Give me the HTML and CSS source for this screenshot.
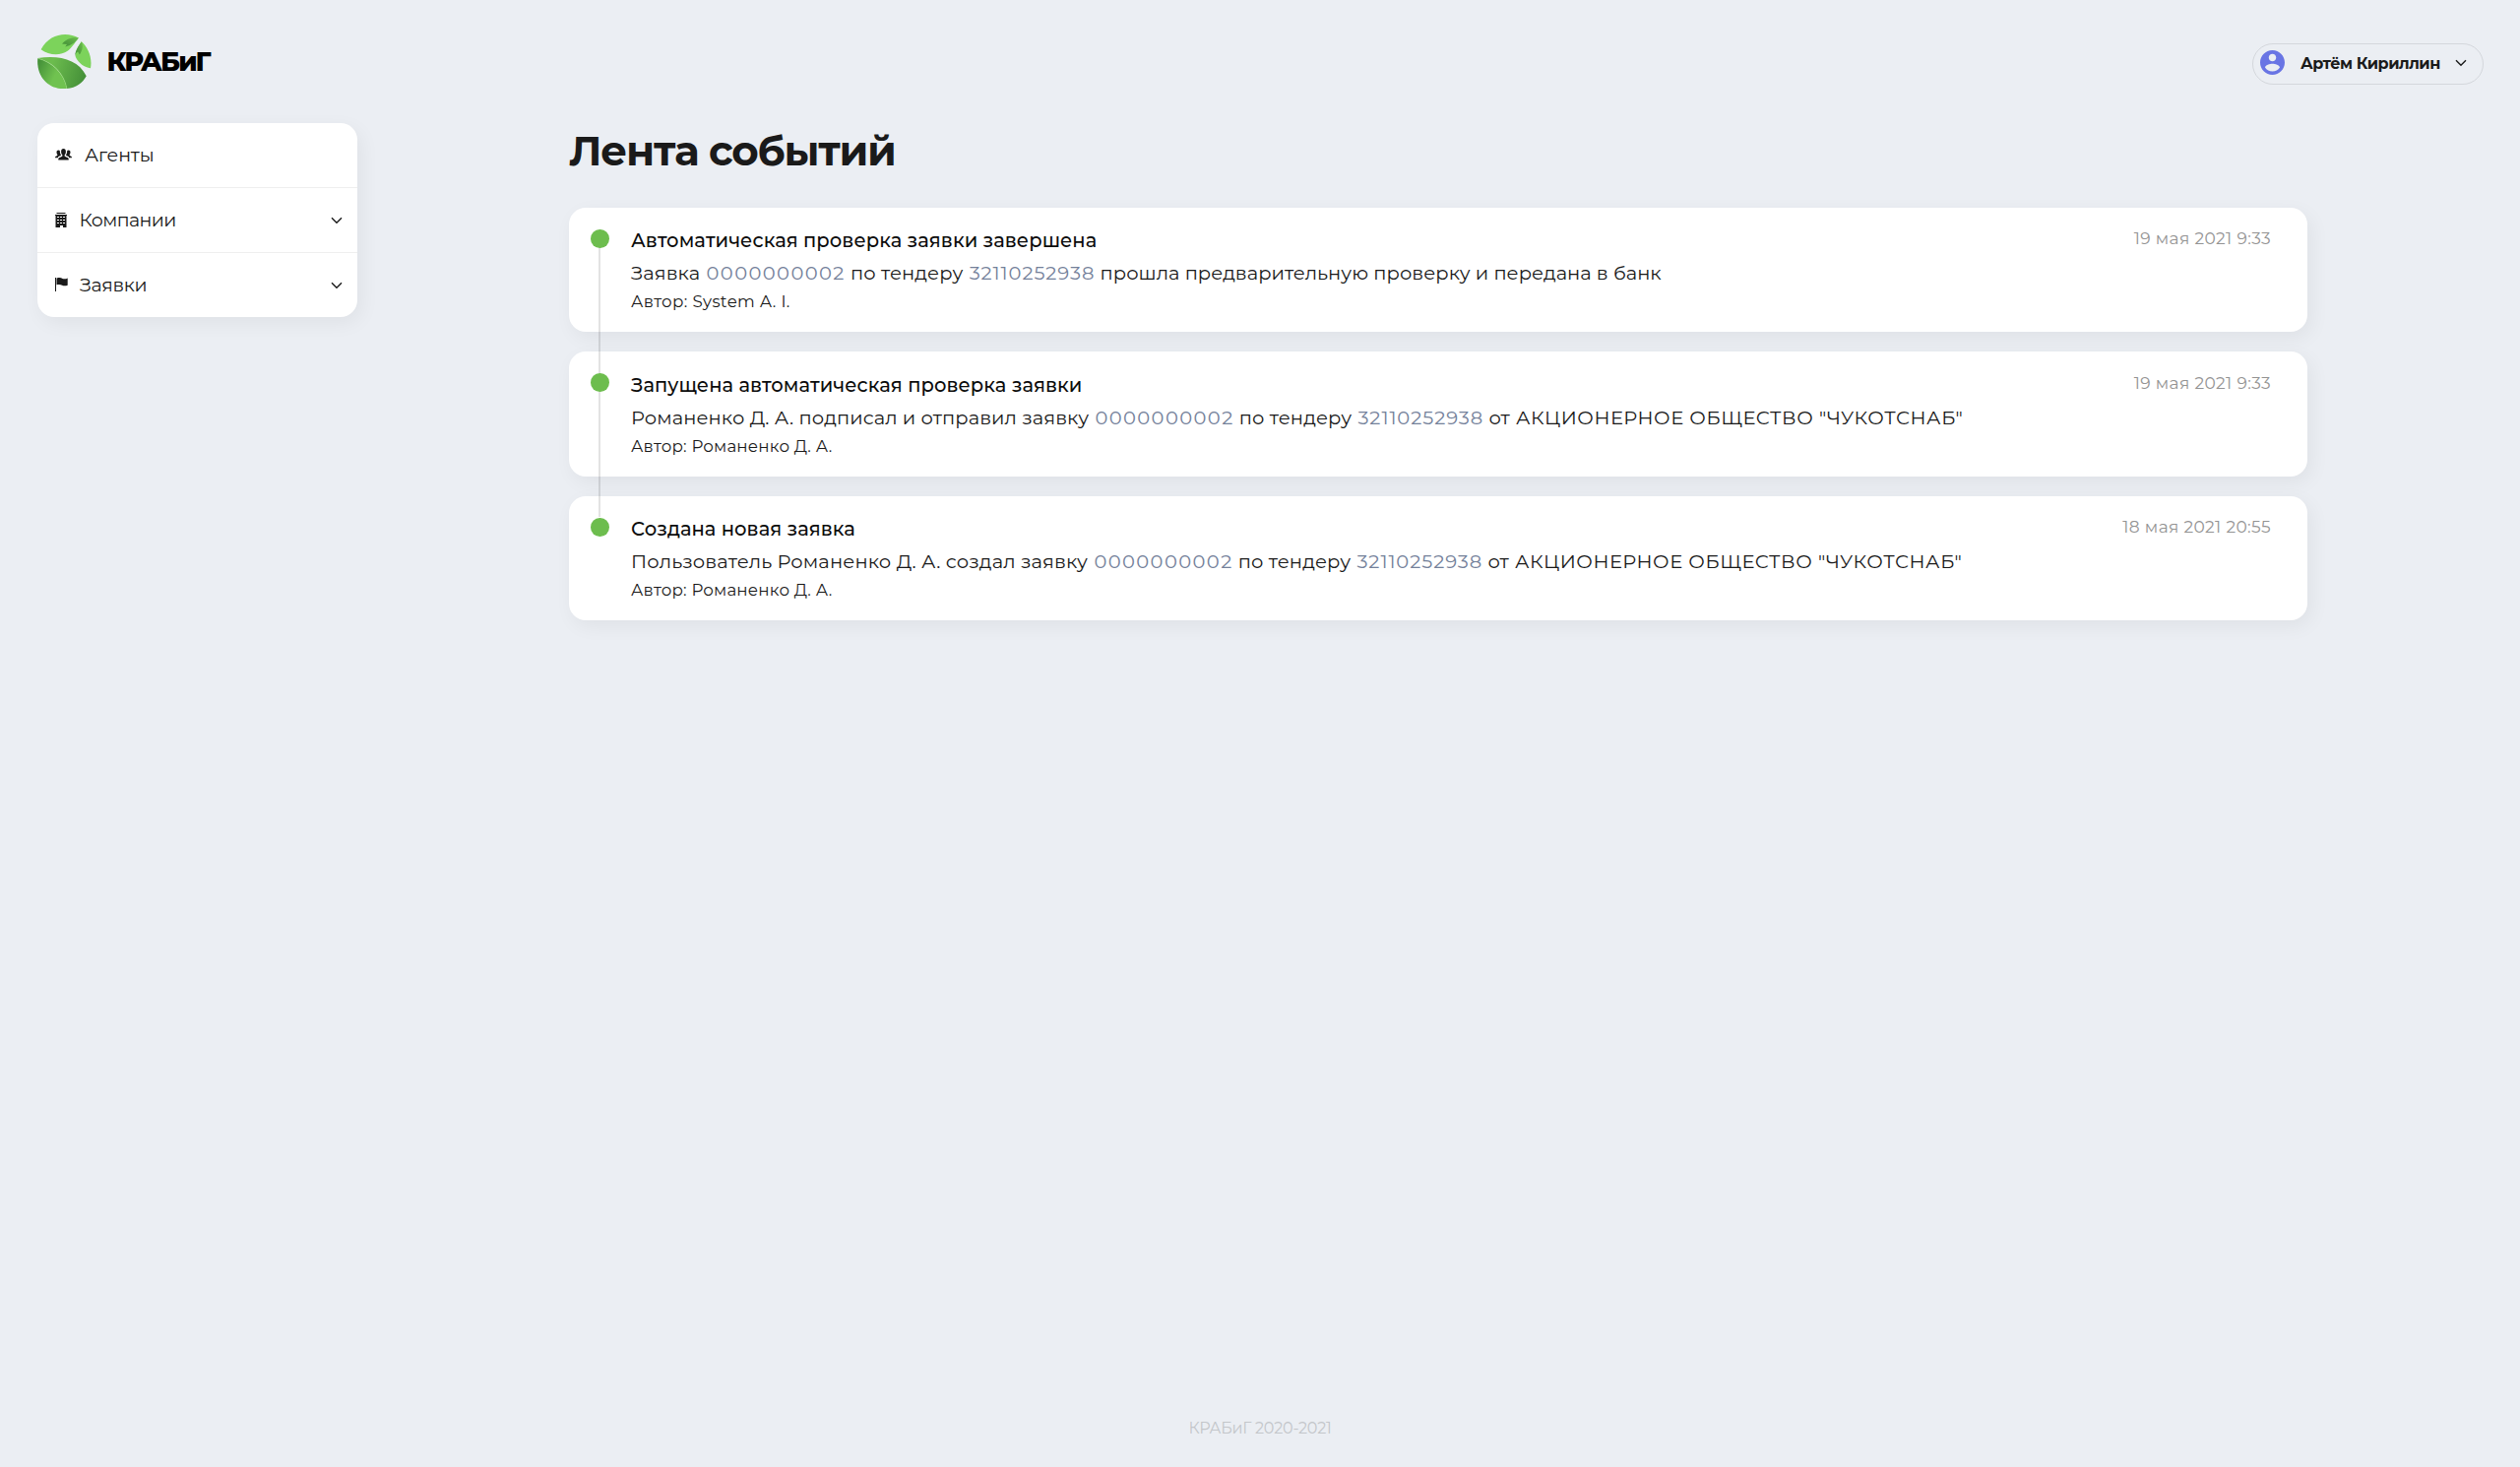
FILE: index.html
```html
<!DOCTYPE html>
<html lang="ru">
<head>
<meta charset="utf-8">
<title>КРАБиГ</title>
<link rel="stylesheet" href="styles.css">
</head>
<body>
<header class="header">
  <a class="brand">
    <svg class="brand-mark" viewBox="12 14 165 167">
      <defs>
        <linearGradient id="leaf" x1="0" y1=".2" x2="1" y2=".7"><stop offset="0" stop-color="#459139"/><stop offset=".62" stop-color="#70c250"/></linearGradient>
        <linearGradient id="leafHalf" x1="0" y1=".4" x2="1" y2=".6"><stop offset=".25" stop-color="#6cbc4e"/><stop offset="1" stop-color="#448f38"/></linearGradient>
        <linearGradient id="fold" x1="0" y1="1" x2="1" y2="0"><stop offset="0" stop-color="#3f8b35"/><stop offset="1" stop-color="#6cbd4e"/></linearGradient>
      </defs>
      <path fill="#7cd35b" d="M22 60C40 28 68 14 96 14c16 0 30 4 42 11-14 18-20 30-34 40-22 15-57 14-82-5z"/>
      <path fill="url(#fold)" d="M138 25C117 20 99 29 87 43l15 1-5 8c18-4 30-12 41-27z"/>
      <path fill="#7cd35b" d="M147 36c20 19 34 48 28 82-19-2-37-15-46-34-3-15 8-32 18-48z"/>
      <path fill="url(#fold)" d="M147 36c-10 14-20 29-20 46 1-9 5-14 9-15l5 9c9-12 12-27 6-40z"/>
      <path fill="url(#leafHalf)" d="M12 87c63-10 124 2 150 55-12 22-32 36-60 39-9-47-42-81-90-94z"/>
      <path fill="url(#leaf)" d="M12 88c45 12 79 45 90 92-48 9-96-30-90-92z"/>
      <path fill="none" stroke="#8fdb70" stroke-width="1.6" d="M12 88c48 12 81 46 90 93"/>
    </svg>
    <span class="brand-name">КРАБиГ</span>
  </a>
  <button class="user">
    <svg class="user-icon" viewBox="2 2 20 20"><path d="M12 2C6.48 2 2 6.48 2 12s4.48 10 10 10 10-4.48 10-10S17.52 2 12 2zm0 3c1.66 0 3 1.34 3 3s-1.34 3-3 3-3-1.34-3-3 1.34-3 3-3zm0 14.2c-2.5 0-4.71-1.28-6-3.22.03-1.99 4-3.08 6-3.08 1.99 0 5.97 1.09 6 3.08-1.29 1.94-3.5 3.22-6 3.22z"/></svg>
    <span class="user-name">Артём Кириллин</span>
    <svg class="chevron" viewBox="0 0 12 8"><path d="M1 1.2l5 5 5-5"/></svg>
  </button>
</header>
<div class="layout">
  <nav class="menu">
    <a class="menu-item">
      <svg class="icon icon-group" viewBox="0 0 17 12"><path d="M8.500 0c1.600 0 2.400 1.100 2.400 2.900 0 1.400-.5 2.600-1.200 3.200v1.600l3.300 1.500c.5.300.7.600.7 1.100V11.500H3.300V10.300c0-.5.2-.8.7-1.100l3.300-1.500V6.100C6.600 5.500 6.100 4.300 6.100 2.900 6.100 1.100 6.900 0 8.500 0zM3.500 1.500c.6 0 1 .2 1.300.5 0 1.700.4 3.300 1.200 4.400v.4L3 8.300v.9H0c0-.9.200-1.200.8-1.500l1.500-.8v-.8c-.5-.5-.8-1.300-.8-2.300 0-1.400.7-2.300 2-2.300zM13.500 1.500c-.6 0-1 .2-1.300.5 0 1.700-.4 3.300-1.200 4.400v.4l3 1.500v.9h3c0-.9-.2-1.200-.8-1.500l-1.500-.8v-.8c.5-.5.8-1.300.8-2.300 0-1.400-.7-2.300-2-2.300z"/></svg>
      <span class="menu-label menu-label-agents">Агенты</span>
    </a>
    <a class="menu-item">
      <svg class="icon icon-building" viewBox="0 0 12 15"><path fill-rule="evenodd" d="M1.500 0h9v1h-9zM0 2h12v1h-.5v12H8v-2H5v2H.5V3H0zM2 4v1h2V4zM5 4v1h2V4zM8 4v1h2V4zM2 7v1h2V7zM5 7v1h2V7zM8 7v1h2V7zM2 10v1h2v-1zM5 10v1h2v-1zM8 10v1h2v-1z"/></svg>
      <span class="menu-label menu-label-companies">Компании</span>
      <svg class="chevron" viewBox="0 0 12 8"><path d="M1 1.2l5 5 5-5"/></svg>
    </a>
    <a class="menu-item">
      <svg class="icon icon-flag" viewBox="0 0 13 14"><path d="M0 0h1v14H0zM1.500.4C4-.5 6 .2 7.500 1c1.600.5 3.500.3 5.200-.6V7.700c-2 .7-4 .700-5.600 0C5.500 6.800 3.500 6.600 1.500 7.300z"/></svg>
      <span class="menu-label menu-label-requests">Заявки</span>
      <svg class="chevron" viewBox="0 0 12 8"><path d="M1 1.2l5 5 5-5"/></svg>
    </a>
  </nav>
  <main class="feed">
    <h1 class="feed-title">Лента событий</h1>
    <div class="events">
      <article class="event">
        <div class="event-body">
          <h2 class="event-title">Автоматическая проверка заявки завершена</h2>
          <p class="event-text">Заявка <a class="number">0000000002</a> по тендеру <a class="number number-tender">32110252938</a> <span class="outcome">прошла предварительную проверку и передана в банк</span></p>
          <p class="event-author event-author-system">Автор: System A. I.</p>
        </div>
        <time class="event-date">19 мая 2021 9:33</time>
      </article>
      <article class="event">
        <div class="event-body">
          <h2 class="event-title">Запущена автоматическая проверка заявки</h2>
          <p class="event-text"><span class="action-signed">Романенко Д. А. подписал и отправил заявку</span> <a class="number">0000000002</a> по тендеру <a class="number number-tender">32110252938</a> от <span class="company">АКЦИОНЕРНОЕ ОБЩЕСТВО "ЧУКОТСНАБ"</span></p>
          <p class="event-author">Автор: Романенко Д. А.</p>
        </div>
        <time class="event-date">19 мая 2021 9:33</time>
      </article>
      <article class="event">
        <div class="event-body">
          <h2 class="event-title">Создана новая заявка</h2>
          <p class="event-text"><span class="action-created">Пользователь Романенко Д. А. создал заявку</span> <a class="number">0000000002</a> по тендеру <a class="number number-tender">32110252938</a> от <span class="company">АКЦИОНЕРНОЕ ОБЩЕСТВО "ЧУКОТСНАБ"</span></p>
          <p class="event-author">Автор: Романенко Д. А.</p>
        </div>
        <time class="event-date">18 мая 2021 20:55</time>
      </article>
    </div>
  </main>
</div>
<footer class="footer">КРАБиГ 2020-2021</footer>
</body>
</html>
```

FILE: styles.css
```css
* { box-sizing: border-box; }

body {
  display: flex;
  flex-direction: column;
  margin: 0;
  min-height: 1490px;
  background: #ebeef3;
  color: #1a1a1a;
  font-family: Montserrat, Inter, sans-serif;
  font-size: 19.5px;
}

h1, h2, p { margin: 0; }

.header {
  display: flex;
  justify-content: space-between;
  height: 125px;
  padding: 35px 37px 0 38px;
}

.brand {
  display: flex;
  gap: 15.5px;
  height: 55px;
}

.brand-mark { width: 55px; height: 55px; }

.brand-name {
  color: #000;
  font-size: 27px;
  font-weight: 800;
  line-height: 55px;
  letter-spacing: -1.95px;
}

.user {
  display: flex;
  align-items: center;
  width: 235px;
  height: 42px;
  margin-top: 9px;
  padding: 0 16px 0 7px;
  border: 1px solid #d4d7dc;
  border-radius: 21px;
  background: none;
  color: inherit;
  font: 700 16px/42px Montserrat, Inter, sans-serif;
}

.user-icon {
  width: 25px;
  height: 25px;
  margin: 0 16px 3px 0;
  fill: #6975e4;
}

.user-name {
  flex: 1;
  text-align: left;
  letter-spacing: -.5px;
}

.chevron {
  width: 12px;
  height: 8px;
  fill: none;
  stroke: #1a1a1a;
  stroke-width: 1.4;
}

.user .chevron { margin-bottom: 2px; }

.menu .chevron { margin-top: 1px; }

.layout {
  display: grid;
  grid-template-columns: 325px 1766px;
  column-gap: 215px;
  align-items: start;
  padding-left: 38px;
}

.menu {
  border-radius: 17px;
  background: #fff;
  box-shadow: 4px 6px 20px rgba(0, 0, 0, .055);
}

.menu-item {
  display: flex;
  align-items: center;
  height: 65px;
  padding: 0 15px 0 18px;
}

.menu-item + .menu-item {
  height: 66px;
  border-top: 1px solid #efefef;
}

.menu-label {
  flex: 1;
  font-size: 19px;
  line-height: 26px;
}

.menu-label-agents { letter-spacing: -.1px; }
.menu-label-companies { letter-spacing: -.55px; }
.menu-label-requests { letter-spacing: -.3px; }

.icon { fill: #1a1a1a; }
.icon-group { width: 17px; height: 12px; margin: 0 13px 2px 0; }
.icon-building { width: 12px; height: 15px; margin: 0 12.5px 0 0; }
.icon-flag { width: 13px; height: 14px; margin: 0 12px 1px 0; }

.feed-title {
  margin-bottom: 30px;
  font-size: 42px;
  font-weight: 700;
  line-height: 56px;
  letter-spacing: -1.25px;
}

.events {
  display: flex;
  flex-direction: column;
  gap: 20px;
}

.event {
  position: relative;
  display: flex;
  justify-content: space-between;
  height: 126.4px;
  padding: 17.3px 37px 0 63px;
  border-radius: 17px;
  background: #fff;
  box-shadow: 4px 6px 20px rgba(0, 0, 0, .055);
}

/* Timeline marker and the line down to the next one */
.event::before {
  content: "";
  position: absolute;
  left: 22px;
  top: 22px;
  width: 18.5px;
  height: 19px;
  border-radius: 50%;
  background: #6dbd4e;
}

.event:not(:last-child)::after {
  content: "";
  position: absolute;
  z-index: 1;
  left: 30px;
  top: 41px;
  width: 2px;
  height: 127px;
  background: rgba(0, 0, 0, .11);
}

.event-title {
  font-size: 19.5px;
  font-weight: 500;
  line-height: 32px;
  letter-spacing: .07px;
  color: #0c0c0c;
}

.event-text {
  line-height: 34px;
  letter-spacing: .11px;
}

.outcome { letter-spacing: .04px; }
.action-signed { letter-spacing: .1px; }
.action-created { letter-spacing: .15px; }

.number {
  margin-left: 1px;
  color: #74819a;
  letter-spacing: 1.4px;
}

.number-tender { letter-spacing: .95px; }

.company {
  margin-left: 1px;
  letter-spacing: .55px;
}

.event-author {
  font-size: 16.7px;
  line-height: 24px;
  letter-spacing: .2px;
}

.event-author-system { letter-spacing: .35px; }

.event-date {
  color: #939393;
  font-size: 17px;
  line-height: 28px;
  letter-spacing: .38px;
}

.footer {
  margin-top: auto;
  padding-bottom: 25px;
  color: #c3c6ca;
  font-size: 16px;
  line-height: 28px;
  letter-spacing: -.27px;
  text-align: center;
}
```
